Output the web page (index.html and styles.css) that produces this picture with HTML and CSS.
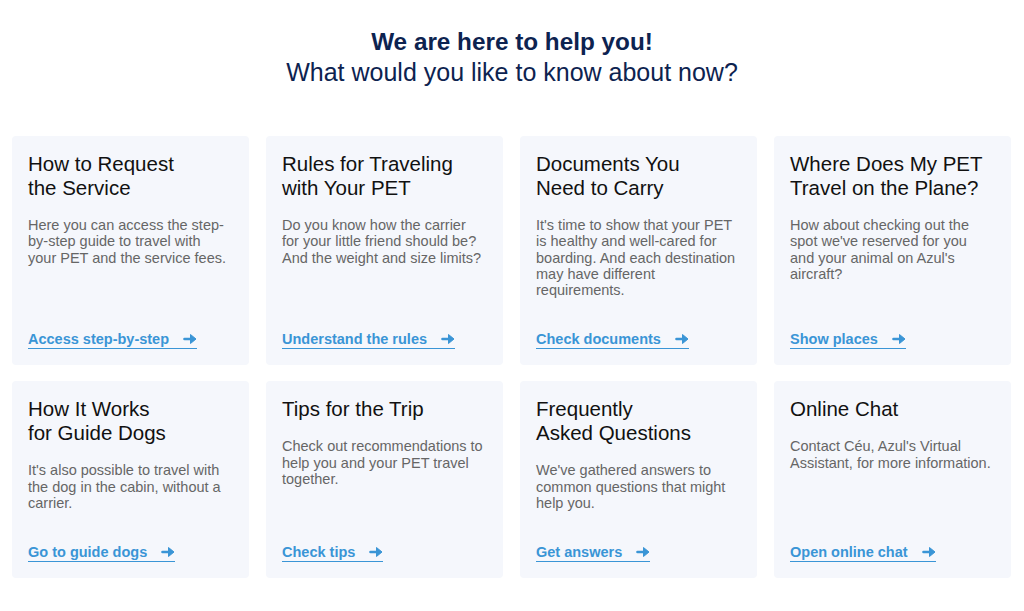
FILE: index.html
```html
<!DOCTYPE html>
<html lang="en">
<head>
    <meta charset="UTF-8">
    <meta name="viewport" content="width=device-width, initial-scale=1.0">
    <title>PET Travel Help</title>
    <link rel="stylesheet" href="styles.css">
</head>
<body>

    <header class="intro">
        <h1>We are here to help you!</h1>
        <p>What would you like to know about now?</p>
    </header>

    <main class="cards">
        <div class="card">
            <h2>How to Request<br>the Service</h2>
            <p>Here you can access the step-by-step guide to travel with your PET and the service fees.</p>
            <a href="#" class="card-link">Access step-by-step <svg viewBox="0 0 14 12" width="14" height="12"><path d="M1.5 6h7" /><polygon points="7.5,1.5 13,6 7.5,10.5" /></svg></a>
        </div>
        <div class="card">
            <h2>Rules for Traveling<br>with Your PET</h2>
            <p>Do you know how the carrier for your little friend should be? And the weight and size limits?</p>
            <a href="#" class="card-link">Understand the rules <svg viewBox="0 0 14 12" width="14" height="12"><path d="M1.5 6h7" /><polygon points="7.5,1.5 13,6 7.5,10.5" /></svg></a>
        </div>
        <div class="card">
            <h2>Documents You<br>Need to Carry</h2>
            <p>It's time to show that your PET is healthy and well-cared for boarding. And each destination may have different requirements.</p>
            <a href="#" class="card-link">Check documents <svg viewBox="0 0 14 12" width="14" height="12"><path d="M1.5 6h7" /><polygon points="7.5,1.5 13,6 7.5,10.5" /></svg></a>
        </div>
        <div class="card">
            <h2>Where Does My PET<br>Travel on the Plane?</h2>
            <p>How about checking out the spot we've reserved for you and your animal on Azul's aircraft?</p>
            <a href="#" class="card-link">Show places <svg viewBox="0 0 14 12" width="14" height="12"><path d="M1.5 6h7" /><polygon points="7.5,1.5 13,6 7.5,10.5" /></svg></a>
        </div>
        <div class="card">
            <h2>How It Works<br>for Guide Dogs</h2>
            <p>It's also possible to travel with the dog in the cabin, without a carrier.</p>
            <a href="#" class="card-link">Go to guide dogs <svg viewBox="0 0 14 12" width="14" height="12"><path d="M1.5 6h7" /><polygon points="7.5,1.5 13,6 7.5,10.5" /></svg></a>
        </div>
        <div class="card">
            <h2>Tips for the Trip</h2>
            <p>Check out recommendations to help you and your PET travel together.</p>
            <a href="#" class="card-link">Check tips <svg viewBox="0 0 14 12" width="14" height="12"><path d="M1.5 6h7" /><polygon points="7.5,1.5 13,6 7.5,10.5" /></svg></a>
        </div>
        <div class="card">
            <h2>Frequently<br>Asked Questions</h2>
            <p>We've gathered answers to common questions that might help you.</p>
            <a href="#" class="card-link">Get answers <svg viewBox="0 0 14 12" width="14" height="12"><path d="M1.5 6h7" /><polygon points="7.5,1.5 13,6 7.5,10.5" /></svg></a>
        </div>
        <div class="card">
            <h2>Online Chat</h2>
            <p>Contact Céu, Azul's Virtual Assistant, for more information.</p>
            <a href="#" class="card-link">Open online chat <svg viewBox="0 0 14 12" width="14" height="12"><path d="M1.5 6h7" /><polygon points="7.5,1.5 13,6 7.5,10.5" /></svg></a>
        </div>
    </main>

</body>
</html>
```

FILE: styles.css
```css
body {
    margin: 0;
    font-family: "Liberation Sans", Arial, sans-serif;
    background-color: #fff;
    color: #111;
}
.intro {
    text-align: center;
    padding-top: 27px;
    color: #0d2350;
}
.intro h1, .intro p {
    margin: 0;
    line-height: 30px;
}
.intro h1 {
    font-size: 24.3px;
    font-weight: bold;
}
.intro p {
    font-size: 25px;
}
.cards {
    display: grid;
    grid-template-columns: repeat(4, 237px);
    gap: 16px 17px;
    padding: 49px 0 0 12px;
}
.card {
    display: flex;
    flex-direction: column;
    align-items: flex-start;
    background-color: #f5f7fc;
    border-radius: 4px;
    padding: 16px 18px 16px 16px;
}
.card h2 {
    margin: 0 0 17px;
    font-size: 20.5px;
    line-height: 24px;
    font-weight: normal;
    color: #111;
}
.card p {
    margin: 0 0 33px;
    font-size: 14.5px;
    line-height: 16.3px;
    color: #666;
}
.card-link {
    margin-top: auto;
    display: inline-flex;
    align-items: center;
    gap: 14px;
    font-size: 14.5px;
    line-height: 16px;
    font-weight: bold;
    color: #3a95d6;
    text-decoration: none;
    border-bottom: 1px solid #3a95d6;
    padding-bottom: 1px;
}
.card-link svg path {
    stroke: #3a95d6;
    stroke-width: 2.6;
    stroke-linecap: round;
    fill: none;
}
.card-link svg polygon {
    fill: #3a95d6;
    stroke: #3a95d6;
    stroke-width: 1;
    stroke-linejoin: round;
}
```
